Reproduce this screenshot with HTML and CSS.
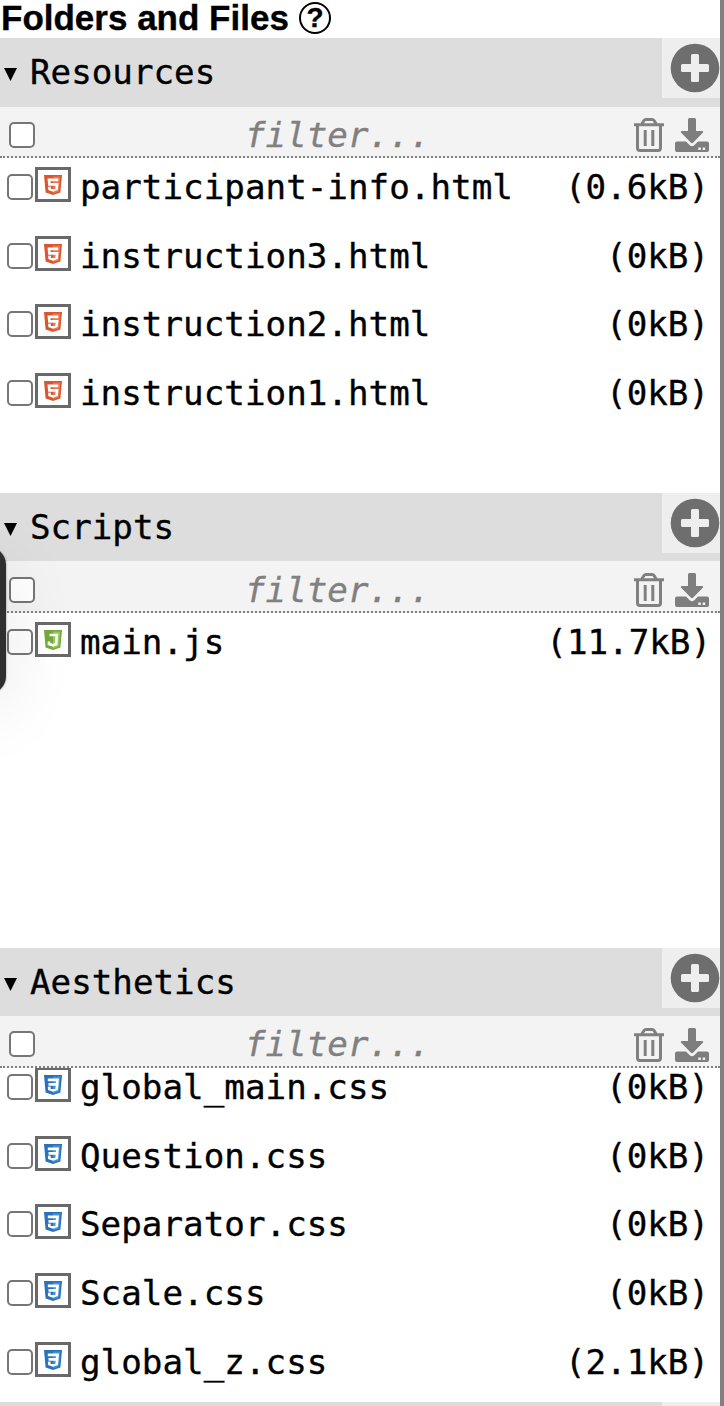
FILE: index.html
```
<!DOCTYPE html>
<html lang="en">
<head>
<meta charset="utf-8">
<title>Folders and Files</title>
<link rel="stylesheet" href="styles.css">
</head>
<body>
<svg class="defs" width="0" height="0" aria-hidden="true">
  <symbol id="help" viewBox="0 0 34 34"><circle cx="17" cy="17" r="15" fill="none" stroke="#000" stroke-width="2"/></symbol>
  <symbol id="plus" viewBox="0 0 50 50"><circle cx="25" cy="25" r="24.3" fill="#6e6e6e"/><path fill="#eee" d="M22.500 11h5q1.500 0 1.500 1.500V21h8.500q1.500 0 1.500 1.500v5q0 1.500-1.500 1.500H29v8.500q0 1.500-1.500 1.500h-5q-1.500 0-1.500-1.500V29h-8.500q-1.500 0-1.500-1.500v-5q0-1.500 1.500-1.500H21v-8.500q0-1.500 1.500-1.500z"/></symbol>
  <symbol id="trash" viewBox="0 0 30 34"><g fill="none" stroke="#808080"><path stroke-width="3" d="M0 6.700h30M7.800 6 10 2.500q.6-1 2-1h6q1.400 0 2 1L22.200 6"/><path stroke-width="3" d="M3.500 7v23q0 2.500 2.500 2.500h18q2.500 0 2.500-2.500V7"/><path stroke-width="3" d="M11.200 12v16M18.800 12v16"/></g></symbol>
  <symbol id="download" viewBox="0 0 34 34"><path fill="#7e7e7e" d="M14.500 0h5q1.500 0 1.500 1.500V13h6q2 .2.8 1.700L18 24.700q-1 .9-2 0L6.200 14.700Q5 13.200 7 13h6V1.500Q13 0 14.500 0zM2 23.500h9l4 4q2 1.600 4 0l4-4h9q2 0 2 2V32q0 2-2 2H2q-2 0-2-2v-6.500q0-2 2-2z"/><path fill="#f3f3f3" d="M23.300 29.500h2.500V32h-2.500zM27.700 29.500h2.500V32h-2.500z"/></symbol>
  <symbol id="html" viewBox="0 0 18 20"><path fill="#d9572f" d="M0 0h18l-1.600 17.500L9 20l-7.400-2.500z"/><path fill="#e8764e" d="M9 1.500h7.300L15 16.500 9 18.500z"/><path fill="none" stroke="#fff" stroke-width="2.700" d="M14.300 4.900H5l.4 4.500h7.700l-.5 4.700L9 15.300l-3.400-1.200-.2-2.400"/></symbol>
  <symbol id="js" viewBox="0 0 18 20"><path fill="#76a93b" d="M0 0h18l-1.600 17.500L9 20l-7.400-2.500z"/><path fill="#93c954" d="M9 1.500h7.300L15 16.500 9 18.500z"/><path fill="none" stroke="#fff" stroke-width="2.700" d="M5.500 5h7.300l-.6 9L9 15.300l-4-1.300v-2.500"/></symbol>
  <symbol id="css" viewBox="0 0 18 20"><path fill="#2b70bb" d="M0 0h18l-1.600 17.500L9 20l-7.400-2.500z"/><path fill="#4592d6" d="M9 1.500h7.300L15 16.500 9 18.500z"/><path fill="none" stroke="#fff" stroke-width="2.700" d="M3.800 4.900h9.700l-.4 4.500H4.500M13.300 8.500l-.6 5.600L9 15.300l-3.600-1.200-.2-2.400"/></symbol>
</svg>
<main class="panel">
  <h1 class="title"><span class="title-text">Folders and Files</span><span class="help"><svg class="help-ring"><use href="#help"/></svg><span class="help-mark">?</span></span></h1>

  <section class="folder">
    <header class="folder-head"><i class="arrow"></i><span class="name">Resources</span><span class="add"><svg width="50" height="50"><use href="#plus"/></svg></span></header>
    <div class="tools"><i class="box"></i><span class="filter">filter...</span><svg class="trash"><use href="#trash"/></svg><svg class="download"><use href="#download"/></svg></div>
    <div class="files">
      <div class="row"><i class="box"></i><span class="type"><svg><use href="#html"/></svg></span><span class="file">participant-info.html</span><span class="size">(0.6kB)</span></div>
      <div class="row"><i class="box"></i><span class="type"><svg><use href="#html"/></svg></span><span class="file">instruction3.html</span><span class="size">(0kB)</span></div>
      <div class="row"><i class="box"></i><span class="type"><svg><use href="#html"/></svg></span><span class="file">instruction2.html</span><span class="size">(0kB)</span></div>
      <div class="row"><i class="box"></i><span class="type"><svg><use href="#html"/></svg></span><span class="file">instruction1.html</span><span class="size">(0kB)</span></div>
    </div>
  </section>

  <section class="folder lower">
    <header class="folder-head"><i class="arrow"></i><span class="name">Scripts</span><span class="add"><svg width="50" height="50"><use href="#plus"/></svg></span></header>
    <div class="tools"><i class="box"></i><span class="filter">filter...</span><svg class="trash"><use href="#trash"/></svg><svg class="download"><use href="#download"/></svg></div>
    <div class="files">
      <div class="row wide"><i class="box"></i><span class="type"><svg><use href="#js"/></svg></span><span class="file">main.js</span><span class="size">(11.7kB)</span></div>
    </div>
  </section>

  <section class="folder lower last">
    <header class="folder-head"><i class="arrow"></i><span class="name">Aesthetics</span><span class="add"><svg width="50" height="50"><use href="#plus"/></svg></span></header>
    <div class="tools"><i class="box"></i><span class="filter">filter...</span><svg class="trash"><use href="#trash"/></svg><svg class="download"><use href="#download"/></svg></div>
    <div class="files scrolled">
      <div class="row"><i class="box"></i><span class="type"><svg><use href="#css"/></svg></span><span class="file">global_main.css</span><span class="size">(0kB)</span></div>
      <div class="row"><i class="box"></i><span class="type"><svg><use href="#css"/></svg></span><span class="file">Question.css</span><span class="size">(0kB)</span></div>
      <div class="row"><i class="box"></i><span class="type"><svg><use href="#css"/></svg></span><span class="file">Separator.css</span><span class="size">(0kB)</span></div>
      <div class="row"><i class="box"></i><span class="type"><svg><use href="#css"/></svg></span><span class="file">Scale.css</span><span class="size">(0kB)</span></div>
      <div class="row"><i class="box"></i><span class="type"><svg><use href="#css"/></svg></span><span class="file">global_z.css</span><span class="size">(2.1kB)</span></div>
    </div>
  </section>
  <section class="folder"><header class="folder-head"><span class="add"></span></header></section>
</main>
<div class="handle"></div>
</body>
</html>
```
FILE: styles.css
```
* { box-sizing: border-box; }
body {
  margin: 0;
  height: 1406px;
  overflow: hidden;
  position: relative;
  background: #fff;
  color: #000;
  font-family: "DejaVu Sans Mono", monospace;
  font-size: 34.2px;
  -webkit-text-stroke: .35px currentColor;
}
.defs { display: block; height: 0; }
svg { flex: none; }
.panel { height: 1406px; overflow: hidden; border-right: 4px solid #808080; }
.title {
  display: flex;
  height: 38px;
  margin: 0;
  padding-left: 1px;
  font: bold 35px/36px "Liberation Sans", Arial, sans-serif;
  white-space: nowrap;
}
.title-text { width: 297px; flex: none; }
.help { display: grid; width: 34px; height: 34px; margin-top: 1px; place-items: center; }
.help-ring, .help-mark { grid-area: 1 / 1; }
.help-ring { width: 34px; height: 34px; }
.help-mark { font-size: 28px; line-height: 34px; }
.folder { height: 455px; }
.folder.last { height: 454px; }
.folder-head { display: flex; height: 69px; line-height: 69px; background: #ddd; }
.lower .folder-head { height: 68px; }
.arrow {
  width: 13px;
  height: 13px;
  margin: 30px 13px 0 4px;
  background: #000;
  clip-path: polygon(0 0, 100% 0, 50% 100%);
}
.add {
  display: flex;
  width: 58px;
  height: 60px;
  margin-left: auto;
  padding: 5px 0 0 8px;
  background: #eee;
}
.tools {
  display: flex;
  height: 51px;
  padding: 0 11px 0 9px;
  background: #f3f3f3;
  border-bottom: 2px dotted #808080;
}
.lower .tools { height: 52px; padding-top: 1px; }
.last .tools { padding-top: 0; }
.last .trash, .last .download { margin-top: 12px; }
.box {
  flex: none;
  width: 26px;
  height: 26px;
  border: 2px solid #767676;
  border-radius: 5px;
  background: #fff;
}
.tools .box { margin-top: 15px; }
.filter { flex: 1; padding-left: 210px; color: #808080; font-style: italic; line-height: 56px; height: 49px; }
.trash { width: 30px; height: 34px; margin: 11px 11px 0 0; }
.download { width: 34px; height: 34px; margin-top: 11px; }
.files { height: 330px; overflow: hidden; }
.row { display: flex; height: 68.670px; padding: 0 11px 0 7px; line-height: 58px; }
.row.wide { padding-right: 9px; }
.scrolled .row:first-child { margin-top: -10px; }
.row .box { margin-top: 16px; }
.type {
  display: flex;
  flex: none;
  width: 36px;
  height: 35px;
  margin: 9px 0 0 2px;
  padding: 5px 0 0 6px;
  border: 3px solid #696969;
}
.type svg { width: 18px; height: 20px; }
.file { margin-left: 9px; letter-spacing: .03px; }
.size { margin-left: auto; }
.handle {
  position: absolute;
  left: -40px;
  top: 547px;
  width: 46px;
  height: 147px;
  border-radius: 18px;
  background: #2f2f2f;
  box-shadow: 0 0 2px rgba(0, 0, 0, .5), 0 18px 70px rgba(0, 0, 0, .1);
}
```
